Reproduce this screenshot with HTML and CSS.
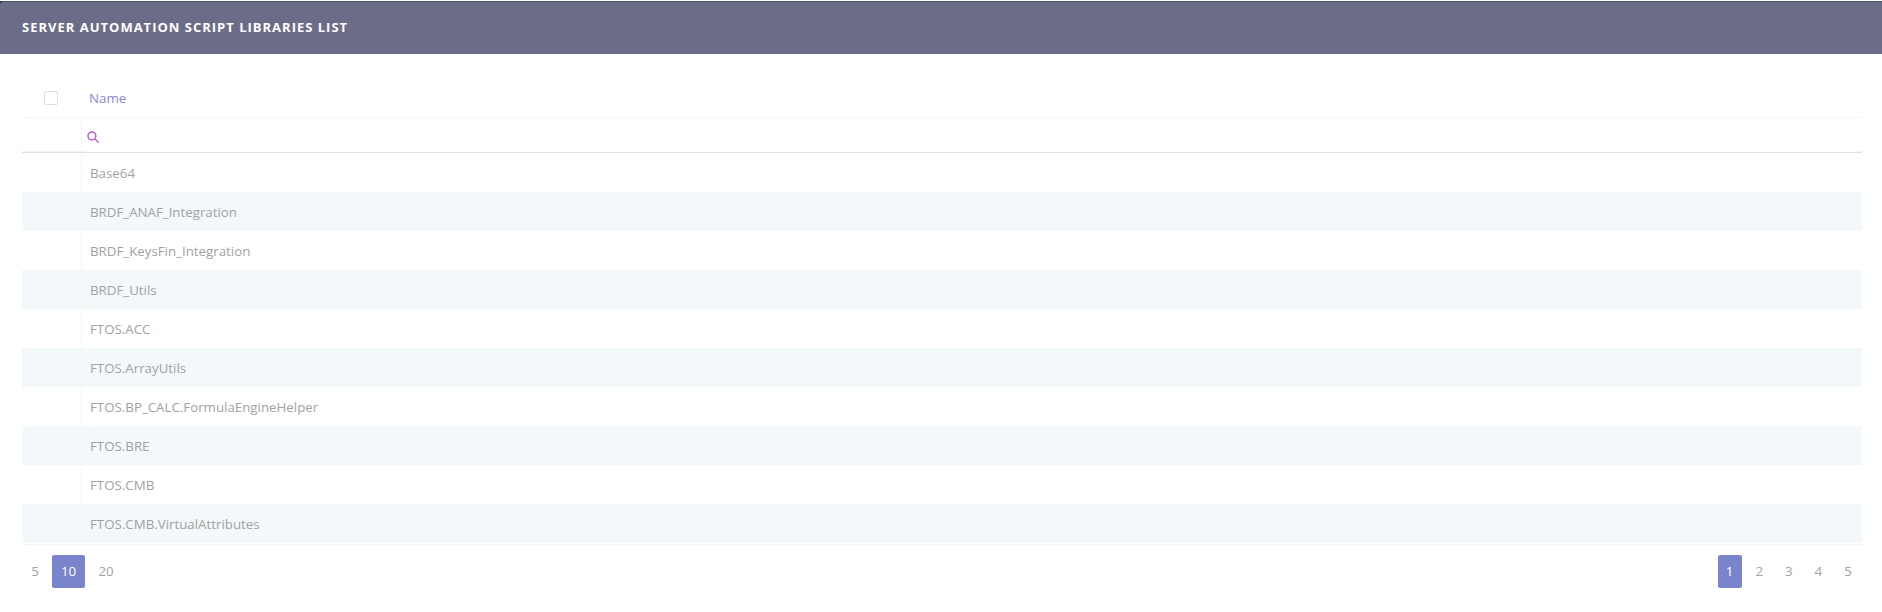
FILE: index.html
```html
<!DOCTYPE html>
<html lang="en">
<head>
<meta charset="utf-8">
<title>Server Automation Script Libraries List</title>
<link rel="stylesheet" href="styles.css">
</head>
<body>
<div class="page">
  <header class="title-bar"><h1>SERVER AUTOMATION SCRIPT LIBRARIES LIST</h1></header>
  <main class="content">
    <div class="grid">
      <div class="head-row">
        <div class="sel-cell"><span class="checkbox"></span></div>
        <div class="name-head">Name</div>
      </div>
      <div class="filter-row">
        <div class="sel-cell"></div>
        <div class="filter-cell">
          <svg class="search" width="12" height="12" viewBox="0 0 12 12" fill="none" stroke="#b565c4" stroke-width="1.5"><circle cx="4.9" cy="4.9" r="3.9"/><path d="M7.8 7.8 11.2 11.2" stroke-linecap="round"/></svg>
        </div>
      </div>
      <div class="rows">
        <div class="row"><div class="sel-cell"></div><div class="name">Base64</div></div>
        <div class="row"><div class="sel-cell"></div><div class="name">BRDF_ANAF_Integration</div></div>
        <div class="row"><div class="sel-cell"></div><div class="name">BRDF_KeysFin_Integration</div></div>
        <div class="row"><div class="sel-cell"></div><div class="name">BRDF_Utils</div></div>
        <div class="row"><div class="sel-cell"></div><div class="name">FTOS.ACC</div></div>
        <div class="row"><div class="sel-cell"></div><div class="name">FTOS.ArrayUtils</div></div>
        <div class="row"><div class="sel-cell"></div><div class="name">FTOS.BP_CALC.FormulaEngineHelper</div></div>
        <div class="row"><div class="sel-cell"></div><div class="name">FTOS.BRE</div></div>
        <div class="row"><div class="sel-cell"></div><div class="name">FTOS.CMB</div></div>
        <div class="row"><div class="sel-cell"></div><div class="name">FTOS.CMB.VirtualAttributes</div></div>
      </div>
    </div>
    <div class="pager">
      <div class="pages sizes"><span class="pg">5</span><span class="pg active">10</span><span class="pg">20</span></div>
      <div class="pages numbers"><span class="pg active">1</span><span class="pg">2</span><span class="pg">3</span><span class="pg">4</span><span class="pg">5</span></div>
    </div>
  </main>
</div>
</body>
</html>
```
FILE: styles.css
```css
* { box-sizing: border-box; }
html, body { margin: 0; padding: 0; background: #fff; }
body { font-family: "Open Sans", "Liberation Sans", sans-serif; font-size: 13.3px; color: #a2a2a2; height: 612px; overflow: hidden; }
.page { background: linear-gradient(#17404a 5px, #fff 5px); }
.title-bar { height: 53px; margin-top: 1px; background: #6b6d88; border-top: 1px solid #45566c; border-top-left-radius: 4px; padding: 0 22px; display: flex; align-items: center; }
.title-bar h1 { margin: 0 0 2px; font-size: 13px; font-weight: 700; letter-spacing: 1px; color: #fff; }
.content { padding: 0 20px 0 22px; background: #fff; }
.grid { padding-bottom: 1px; border-bottom: 1px solid #f1f6f8; }
.head-row { display: flex; height: 64px; padding-top: 25px; border-bottom: 1px solid #f1f6f6; align-items: center; }
.sel-cell { width: 59px; flex: none; display: flex; justify-content: center; padding-right: 1px; }
.checkbox { width: 14px; height: 14px; border: 1px solid #ddd; border-radius: 2px; }
.name-head { padding-left: 8px; color: #828bd2; }
.filter-row { position: relative; display: flex; height: 35px; border-bottom: 1px solid #e0e2e2; }
.filter-row::before { content: ""; position: absolute; left: 0; bottom: 0; width: 65px; height: 1px; background: #f1f5f5; }
.filter-row::after { content: ""; position: absolute; right: 0; bottom: 0; width: 6px; height: 1px; background: #f1f5f5; }
.filter-cell { flex: 1; border-left: 1px solid #f1f6f6; padding: 13px 0 0 5px; }
.search { display: block; }
.row { display: flex; height: 39px; align-items: center; }
.row:nth-child(even) { background: #f3f8fb; }
.name { flex: 1; height: 100%; display: flex; align-items: center; padding-left: 8px; border-left: 1px solid #f1f6f6; }
.pager { display: flex; justify-content: space-between; margin-top: 10px; }
.pages { display: flex; gap: 5.6px; }
.sizes { gap: 4.6px; margin-left: 0.6px; }
.sizes .pg:first-child { padding: 0 8.6px 2px; }
.numbers { margin-right: 2px; }
.pg { min-width: 24px; height: 33px; padding: 0 8.2px 2px; display: flex; align-items: center; justify-content: center; border-radius: 2px; color: #a2a2a2; }
.sizes .pg { padding: 0 8.9px 2px; }
.pg.active { background: #7a84cd; color: #fff; }
```
